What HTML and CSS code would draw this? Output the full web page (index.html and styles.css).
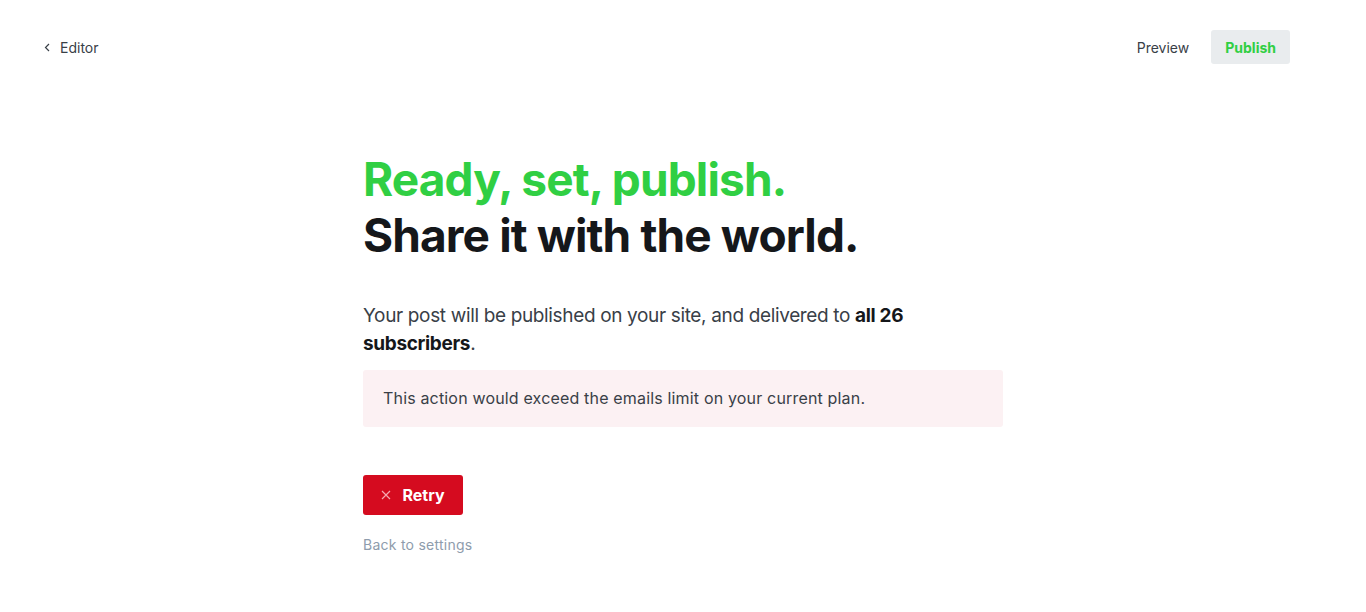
FILE: index.html
```html
<!DOCTYPE html>
<html>
<head>
<meta charset="utf-8">
<link rel="stylesheet" href="styles.css">
</head>
<body>
<header class="topbar">
  <a class="back" href="#">
    <svg class="chev" width="6" height="9" viewBox="0 0 6 9"><path d="M5 1 L1.5 4.5 L5 8" fill="none" stroke="#394047" stroke-width="1.2"/></svg>
    <span>Editor</span>
  </a>
  <div class="actions">
    <a class="preview" href="#">Preview</a>
    <button class="publish">Publish</button>
  </div>
</header>
<main class="content">
  <h1 class="title"><span class="green">Ready, set, publish.</span><br>Share it with the world.</h1>
  <p class="desc">Your post will be published on your site, and delivered to <strong>all 26 subscribers</strong>.</p>
  <div class="error">This action would exceed the emails limit on your current plan.</div>
  <button class="retry">
    <svg width="10" height="10" viewBox="0 0 10 10"><path d="M1 1 L9 9 M9 1 L1 9" stroke="#f6a8b0" stroke-width="1.2"/></svg>
    <span>Retry</span>
  </button>
  <a class="back-settings" href="#">Back to settings</a>
</main>
</body>
</html>
```
FILE: styles.css
```css
* { box-sizing: border-box; }
html, body { margin: 0; padding: 0; background: #fff; }
body {
  font-family: Inter, "Noto Sans", sans-serif;
  color: #15171a;
  -webkit-font-smoothing: antialiased;
}
a { text-decoration: none; }
.topbar {
  display: flex;
  justify-content: space-between;
  align-items: center;
  padding: 30px 76px 0 44px;
  height: 64px;
}
.back {
  display: flex;
  align-items: center;
  gap: 10px;
  color: #394047;
  font-size: 14px;
}
.actions { display: flex; align-items: center; gap: 22px; }
.preview { color: #394047; font-size: 14px; }
.publish {
  font-family: inherit;
  background: #e9ecee;
  color: #30cf43;
  border: none;
  border-radius: 3px;
  font-weight: 700;
  font-size: 14px;
  height: 34px;
  padding: 0 14px;
}
.content {
  width: 640px;
  margin: 87px 0 0 363px;
  display: flex;
  flex-direction: column;
  align-items: flex-start;
}
.title {
  margin: 0;
  font-size: 46px;
  line-height: 56px;
  font-weight: 700;
  letter-spacing: -0.019em;
  color: #15171a;
}
.green { color: #30cf43; }
.desc {
  margin: 39px 0 0;
  font-size: 19px;
  line-height: 28px;
  color: #394047;
  letter-spacing: -0.35px;
}
.desc strong { color: #15171a; font-weight: 700; }
.error {
  margin-top: 12px;
  width: 100%;
  background: #fcf1f3;
  border-radius: 3px;
  padding: 18px 20px;
  font-size: 16px;
  line-height: 21px;
  color: #394047;
  letter-spacing: 0.17px;
}
.retry {
  margin-top: 48px;
  font-family: inherit;
  display: flex;
  align-items: center;
  justify-content: center;
  gap: 11px;
  width: 100px;
  height: 40px;
  background: #d50b1f;
  color: #fff;
  border: none;
  border-radius: 3px;
  font-weight: 700;
  font-size: 16px;
}
.back-settings {
  margin-top: 21px;
  font-size: 14px;
  letter-spacing: 0.25px;
  color: #8e9cac;
}
```
